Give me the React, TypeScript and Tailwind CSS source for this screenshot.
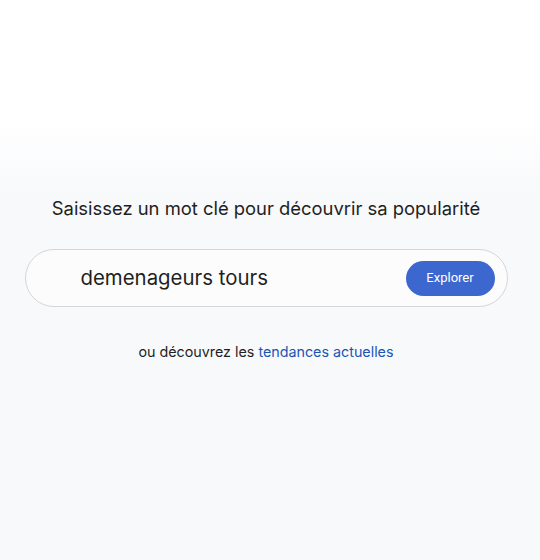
export default function App() {
  return (
    <div
      className="h-[560px] w-full bg-gradient-to-b from-white from-[22%] to-[#f8f9fb] to-[34%] text-[#1f1f1f]"
      style={{ fontFamily: "Inter, Roboto, sans-serif" }}
    >
      <div className="flex w-[532px] flex-col items-center pt-[196px]">
        <h1 className="text-[18.4px] leading-6 font-normal">
          Saisissez un mot clé pour découvrir sa popularité
        </h1>
        <div className="mt-[29px] flex h-[58px] w-[483px] items-center rounded-full border border-[#d4d6d9] bg-[#fcfcfd] pl-[55px] pr-[12px]">
          <span className="flex-1 text-[20.4px] leading-none">demenageurs tours</span>
          <button
            className="h-[35px] w-[89px] rounded-full bg-[#3b67cf] text-[13px] text-white"
            style={{ fontFamily: "Roboto, sans-serif" }}
          >
            Explorer
          </button>
        </div>
        <p className="mt-[35px] text-[14.3px] leading-5">
          ou découvrez les <a className="text-[#1a55b4]">tendances actuelles</a>
        </p>
      </div>
    </div>
  );
}
